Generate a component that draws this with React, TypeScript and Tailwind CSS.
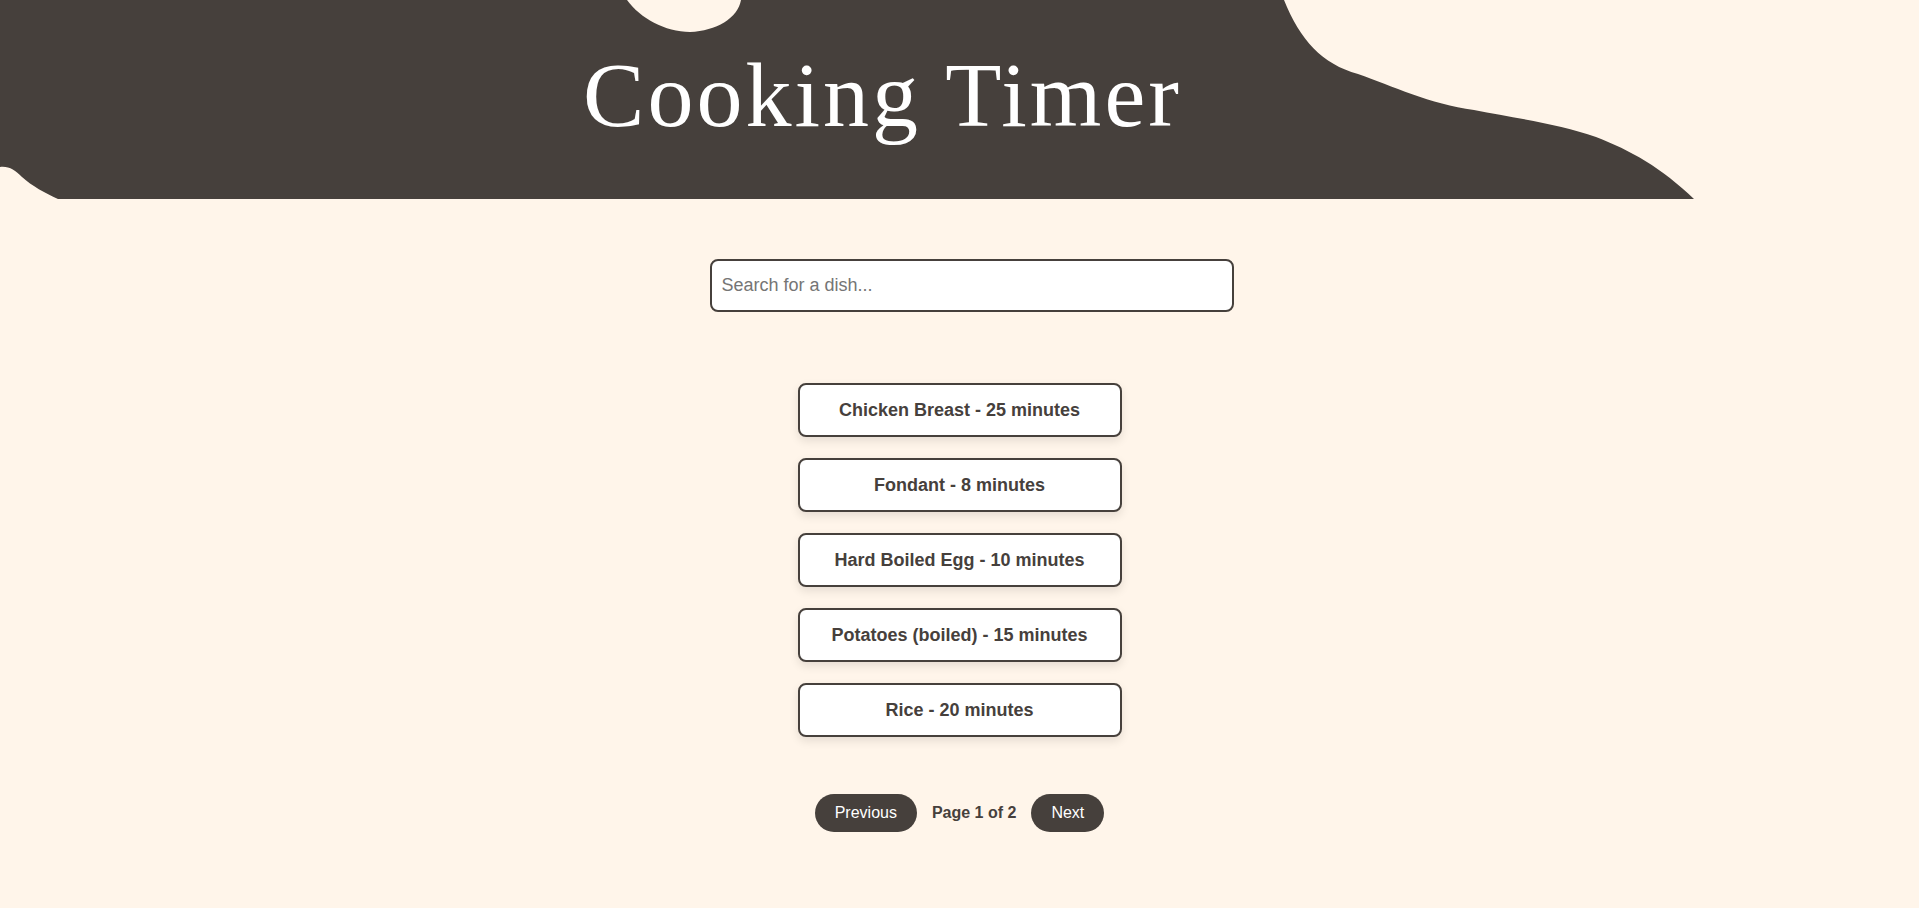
import React from "react";

const dishes = [
  "Chicken Breast - 25 minutes",
  "Fondant - 8 minutes",
  "Hard Boiled Egg - 10 minutes",
  "Potatoes (boiled) - 15 minutes",
  "Rice - 20 minutes",
];

export default function App() {
  return (
    <div
      className="min-h-screen w-full bg-[#fff5ea] text-[#46403c]"
      style={{ fontFamily: '"Liberation Sans", Arial, sans-serif' }}
    >
      <header className="relative h-[199px] w-full overflow-hidden bg-[#46403c]">
        <svg
          className="absolute left-0 top-0"
          width="1919"
          height="199"
          viewBox="0 0 1919 199"
          aria-hidden="true"
        >
          <path
            d="M627 0 C640 18, 665 32, 690 32 C716 31, 738 18, 741 0 Z"
            fill="#fff5ea"
          />
          <path
            d="M0 167 C9 166, 15 170, 22 177 C32 186, 45 193, 58 199 L0 199 Z"
            fill="#fff5ea"
          />
          <path
            d="M1284 0 C1300 40, 1322 64, 1358 74 C1392 86, 1430 104, 1474 110 C1515 118, 1560 124, 1596 137 C1630 150, 1662 168, 1694 199 L1919 199 L1919 0 Z"
            fill="#fff5ea"
          />
        </svg>
        <h1
          className="relative pr-[154px] pt-[49px] text-center text-[92px] leading-[92px] tracking-[3px] text-white font-normal"
          style={{ fontFamily: '"Liberation Serif", "Times New Roman", serif' }}
        >
          Cooking Timer
        </h1>
      </header>

      <main className="flex flex-col items-center">
        <div className="mt-[60px] flex w-[500px]">
          <input
            type="text"
            placeholder="Search for a dish..."
            className="h-[53px] w-[524px] shrink-0 rounded-[8px] border-2 border-[#46403c] bg-white px-[10px] text-[18px] text-[#46403c] placeholder:text-[#757575] outline-none"
          />
        </div>

        <div className="mt-[71px] flex flex-col items-center gap-[21px]">
          {dishes.map((d) => (
            <button
              key={d}
              className="h-[54px] w-[324px] rounded-[8px] border-2 border-[#46403c] bg-white text-[18px] font-bold text-[#46403c] shadow-[0_4px_10px_rgba(0,0,0,0.1)]"
            >
              {d}
            </button>
          ))}
        </div>

        <div className="mt-[57px] flex items-center gap-[15px]">
          <button className="h-[38px] rounded-full bg-[#46403c] px-5 text-[16px] text-white">
            Previous
          </button>
          <span className="text-[16px] font-bold text-[#46403c]">Page 1 of 2</span>
          <button className="h-[38px] rounded-full bg-[#46403c] px-5 text-[16px] text-white">
            Next
          </button>
        </div>
      </main>
    </div>
  );
}
